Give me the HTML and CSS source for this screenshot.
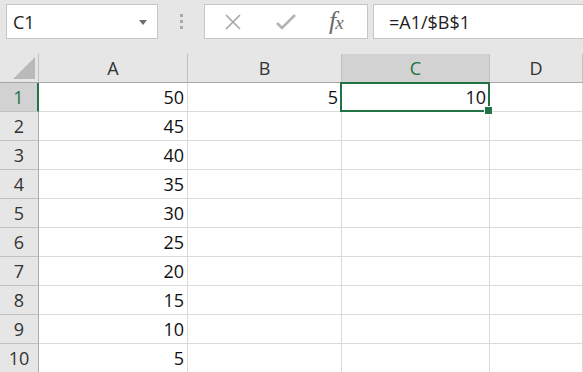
FILE: index.html
```html
<!DOCTYPE html>
<html lang="en">
<head>
    <meta charset="UTF-8">
    <title>Sheet1</title>
    <link rel="stylesheet" href="styles.css">
</head>
<body>
    <div class="toolbar">
        <div class="name-box">
            <span>C1</span>
            <svg class="caret" width="8" height="5" viewBox="0 0 8 5"><path d="M0 0h8L4 5z" fill="#6d6d6d"/></svg>
        </div>
        <div class="grip"><i></i><i></i><i></i></div>
        <div class="fx-buttons">
            <svg width="20" height="16" viewBox="0 0 20 16"><path d="M3 1l14 14M17 1L3 15" stroke="#a6a6a6" stroke-width="1.6" fill="none"/></svg>
            <svg width="22" height="16" viewBox="0 0 22 16"><path d="M2 9l5 5L20 1" stroke="#b3b3b3" stroke-width="2.6" fill="none"/></svg>
            <span class="fx">f<small>x</small></span>
        </div>
        <div class="formula">=A1/$B$1</div>
    </div>

    <div class="sheet">
        <div class="corner"></div>
        <div class="col-head">A</div>
        <div class="col-head">B</div>
        <div class="col-head active">C</div>
        <div class="col-head">D</div>

        <div class="row-head active">1</div>
        <div class="cell">50</div>
        <div class="cell">5</div>
        <div class="cell selected">10</div>
        <div class="cell"></div>

        <div class="row-head">2</div><div class="cell">45</div><div class="cell"></div><div class="cell"></div><div class="cell"></div>
        <div class="row-head">3</div><div class="cell">40</div><div class="cell"></div><div class="cell"></div><div class="cell"></div>
        <div class="row-head">4</div><div class="cell">35</div><div class="cell"></div><div class="cell"></div><div class="cell"></div>
        <div class="row-head">5</div><div class="cell">30</div><div class="cell"></div><div class="cell"></div><div class="cell"></div>
        <div class="row-head">6</div><div class="cell">25</div><div class="cell"></div><div class="cell"></div><div class="cell"></div>
        <div class="row-head">7</div><div class="cell">20</div><div class="cell"></div><div class="cell"></div><div class="cell"></div>
        <div class="row-head">8</div><div class="cell">15</div><div class="cell"></div><div class="cell"></div><div class="cell"></div>
        <div class="row-head">9</div><div class="cell">10</div><div class="cell"></div><div class="cell"></div><div class="cell"></div>
        <div class="row-head">10</div><div class="cell">5</div><div class="cell"></div><div class="cell"></div><div class="cell"></div>
    </div>
</body>
</html>
```

FILE: styles.css
```css
:root {
    --bar-bg: #e6e6e6;
    --head-bg: #e6e6e6;
    --head-active: #d2d2d2;
    --green: #217346;
    --grid: #dadada;
    --head-line: #c0c0c0;
    --text: #111;
}

* {
    margin: 0;
    padding: 0;
    box-sizing: border-box;
}

body {
    font-family: 'Open Sans', sans-serif;
    background: #fff;
    color: var(--text);
    overflow: hidden;
}

.toolbar {
    height: 54px;
    background: var(--bar-bg);
    display: flex;
    align-items: flex-start;
    padding: 4px 0 0 6px;
}

.name-box {
    width: 152px;
    height: 35px;
    background: #fff;
    border: 1px solid #c6c6c6;
    display: flex;
    align-items: center;
    justify-content: space-between;
    padding: 0 10px 0 6px;
    font-size: 18px;
    color: #222;
}

.caret {
    margin-top: 1px;
}

.grip {
    width: 46px;
    height: 35px;
    display: flex;
    flex-direction: column;
    align-items: center;
    justify-content: center;
    gap: 3px;
}

.grip i {
    width: 3px;
    height: 3px;
    background: #a8a8a8;
}

.fx-buttons {
    width: 164px;
    height: 35px;
    background: #fff;
    border: 1px solid #c6c6c6;
    display: flex;
    align-items: center;
    padding-left: 18px;
    gap: 32px;
}

.fx {
    font-family: 'Liberation Serif', serif;
    font-style: italic;
    font-size: 26px;
    line-height: 1;
    color: #6a6a6a;
    margin-top: -2px;
}

.fx small {
    font-size: 19px;
    margin-left: -1px;
}

.formula {
    flex: 1;
    height: 35px;
    margin-left: 5px;
    background: #fff;
    border: 1px solid #c6c6c6;
    border-right: none;
    display: flex;
    align-items: center;
    padding-left: 15px;
    font-size: 18px;
    color: #222;
}

.sheet {
    display: grid;
    grid-template-columns: 39px 149px 154px 148px 1fr;
    grid-auto-rows: 29px;
}

.corner {
    background: var(--head-bg);
    border-right: 1px solid var(--head-line);
    border-bottom: 1px solid #a8a8a8;
    position: relative;
}

.corner::after {
    content: "";
    position: absolute;
    right: 3px;
    bottom: 3px;
    border-left: 22px solid transparent;
    border-bottom: 22px solid #b9b9b9;
}

.col-head,
.row-head {
    background: var(--head-bg);
    color: #333;
    font-size: 18px;
    display: flex;
    align-items: center;
    justify-content: center;
}

.col-head {
    border-right: 1px solid var(--head-line);
    border-bottom: 1px solid #a8a8a8;
}

.row-head {
    border-right: 1px solid #a8a8a8;
    border-bottom: 1px solid var(--head-line);
}

.col-head.active,
.row-head.active {
    background: var(--head-active);
    color: var(--green);
}

.row-head.active {
    border-right: 2px solid var(--green);
}

.col-head.active {
    border-bottom: 1px solid var(--green);
}

.cell {
    border-right: 1px solid var(--grid);
    border-bottom: 1px solid var(--grid);
    font-size: 18px;
    display: flex;
    align-items: center;
    justify-content: flex-end;
    padding-right: 3px;
}

.cell.selected {
    position: relative;
}

.cell.selected::before {
    content: "";
    position: absolute;
    left: -2px;
    top: -1px;
    right: -1px;
    bottom: -1px;
    border: 2px solid var(--green);
}

.cell.selected::after {
    content: "";
    position: absolute;
    right: -4px;
    bottom: -4px;
    width: 7px;
    height: 7px;
    background: var(--green);
    border: 1px solid #fff;
}
```
